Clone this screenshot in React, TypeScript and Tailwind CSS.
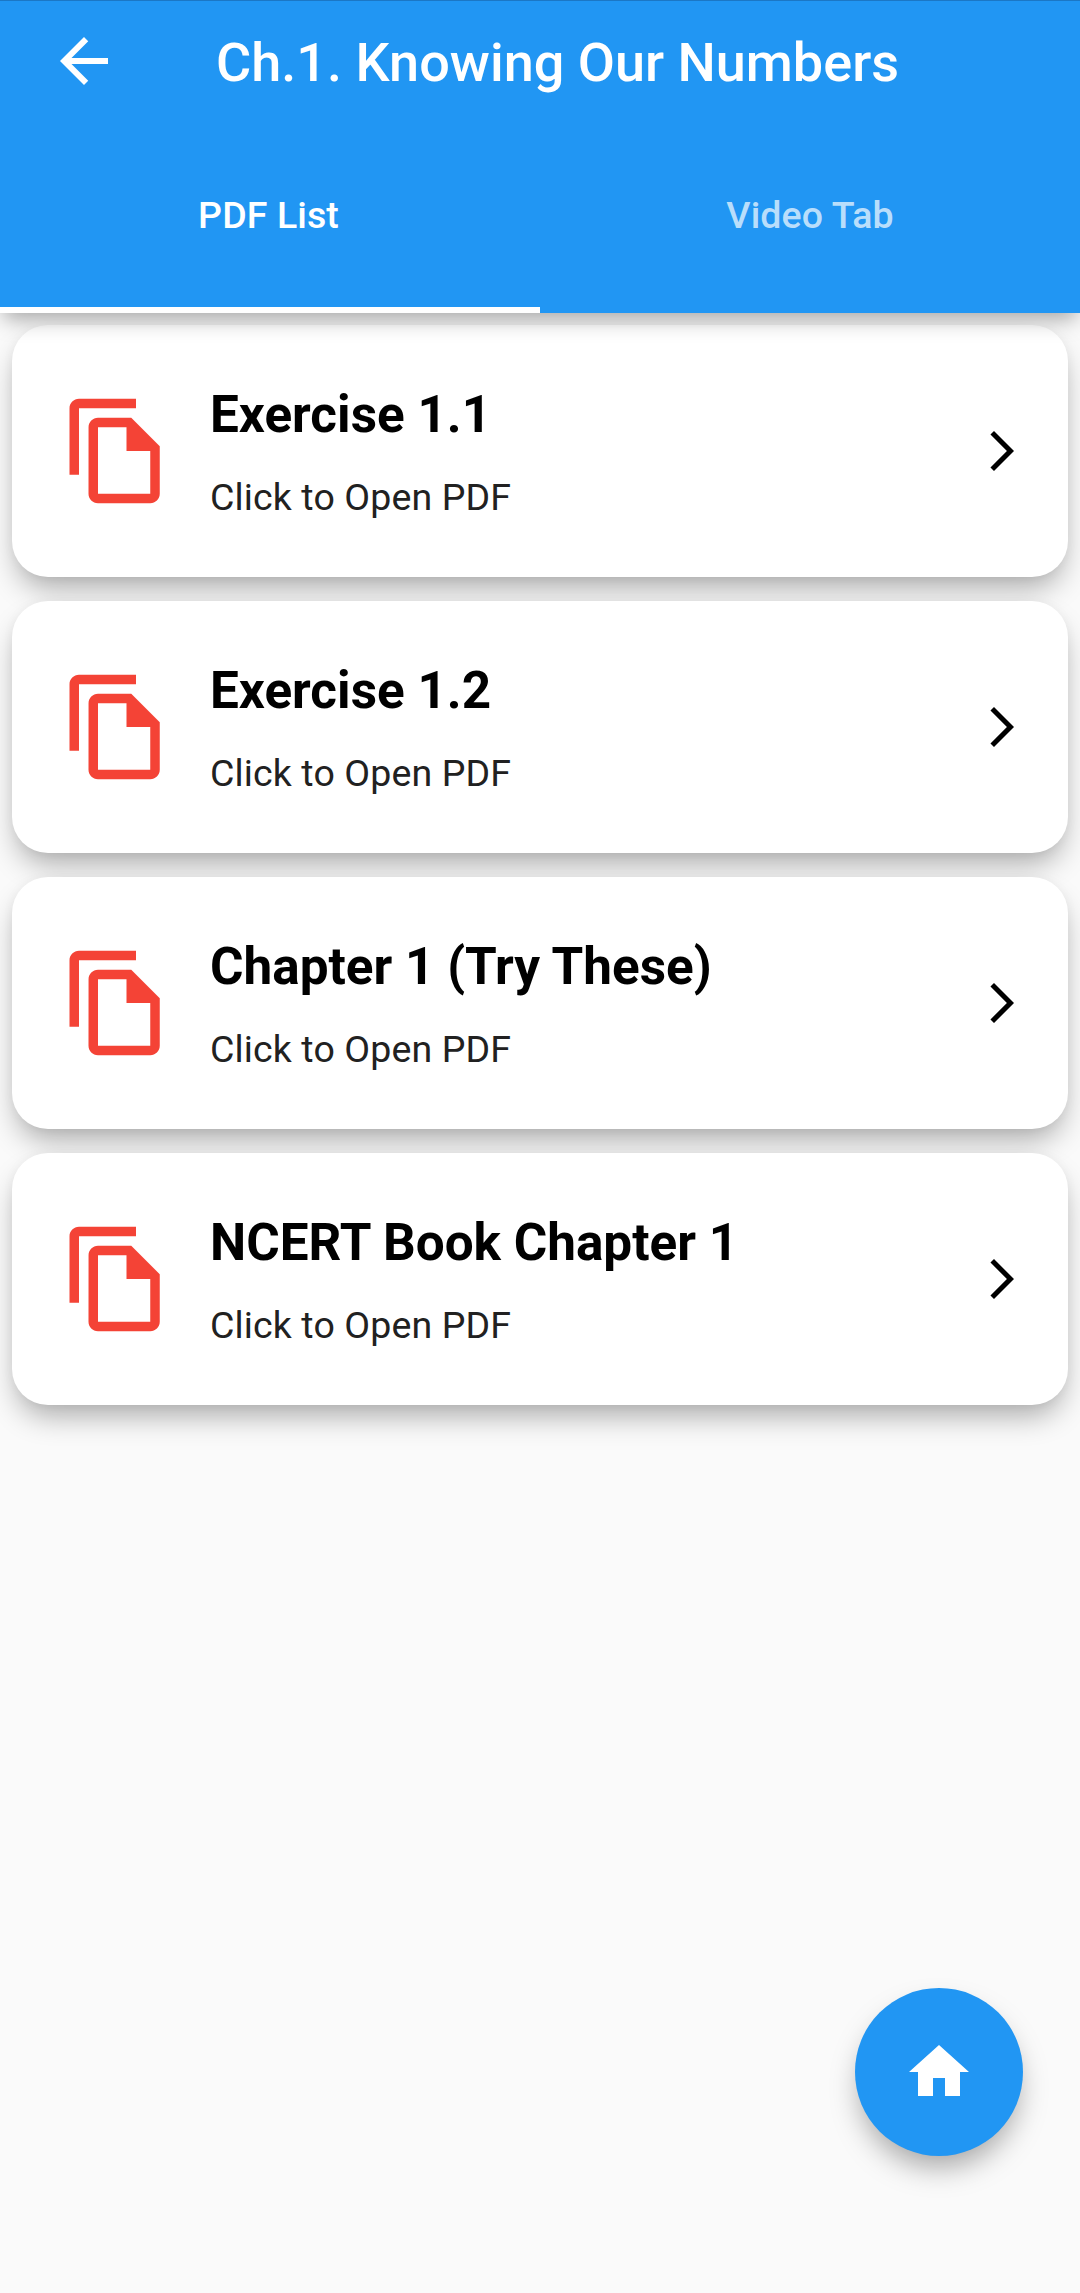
const documents = ["Exercise 1.1", "Exercise 1.2", "Chapter 1 (Try These)", "NCERT Book Chapter 1"];

function Icon({ path, className }: { path: string; className: string }) {
  return (
    <svg viewBox="0 0 24 24" fill="currentColor" aria-hidden="true" className={className}>
      <path d={path} />
    </svg>
  );
}

function Header() {
  return (
    <header className="relative z-10 flex flex-col border-t border-[#1b77c5] bg-[#2196f3] text-white shadow-[0_10px_20px_-4px_rgba(0,0,0,0.34)]">
      <div className="flex h-[120px] items-center pl-12">
        <Icon className="size-18" path="M20 11H7.83l5.59-5.59L12 4l-8 8 8 8 1.41-1.41L7.83 13H20v-2z" />
        <h1 className="ml-24 pt-[3px] text-[54px] leading-[64px] font-medium whitespace-nowrap">Ch.1. Knowing Our Numbers</h1>
      </div>
      <nav className="grid h-48 grid-cols-2 text-[37.5px] leading-[44px] font-medium tracking-[0.1px]">
        <div className="flex items-center justify-center border-b-6 border-white pt-[2px] pr-[3px]">PDF List</div>
        <div className="flex items-center justify-center border-b-6 border-transparent pt-[2px] text-white/70">Video Tab</div>
      </nav>
    </header>
  );
}

function DocumentCard({ title }: { title: string }) {
  return (
    <li className="flex h-63 items-center rounded-[36px] bg-white pr-[42px] pl-12 shadow-[0_16px_30px_-6px_rgba(0,0,0,0.33),0_1px_12px_rgba(0,0,0,0.04)]">
      <Icon
        className="size-[114px] shrink-0 text-[#f44336]"
        path="M16 1H4c-1.1 0-2 .9-2 2v14h2V3h12V1zm-1 4H8c-1.1 0-1.99.9-1.99 2L6 21c0 1.1.89 2 1.99 2H19c1.1 0 2-.9 2-2V11l-6-6zM8 21V7h6v5h5v9H8z"
      />
      <div className="ml-9 flex flex-1 flex-col gap-[30px] pt-[2px]">
        <h2 className="text-[51.25px] leading-[60px] font-bold text-black">{title}</h2>
        <p className="text-[37.5px] leading-[44px] tracking-[0.13px] text-[#212121]">Click to Open PDF</p>
      </div>
      <Icon className="size-12 shrink-0 text-black" path="M6.23 20.23L8 22l10-10L8 2 6.23 3.77 14.46 12z" />
    </li>
  );
}

export default function App() {
  return (
    <div className="relative min-h-[2293px] w-full bg-[#fafafa] font-[Roboto,sans-serif]">
      <Header />
      <main>
        <ul className="flex flex-col gap-6 px-3 pt-3">
          {documents.map((title) => (
            <DocumentCard key={title} title={title} />
          ))}
        </ul>
      </main>
      <button
        type="button"
        aria-label="Home"
        className="absolute right-[57px] bottom-[137px] flex size-42 items-center justify-center rounded-full bg-[#2196f3] text-white shadow-[0_16px_30px_-6px_rgba(0,0,0,0.36)]"
      >
        <Icon className="size-18" path="M10 20v-6h4v6h5v-8h3L12 3 2 12h3v8z" />
      </button>
    </div>
  );
}
